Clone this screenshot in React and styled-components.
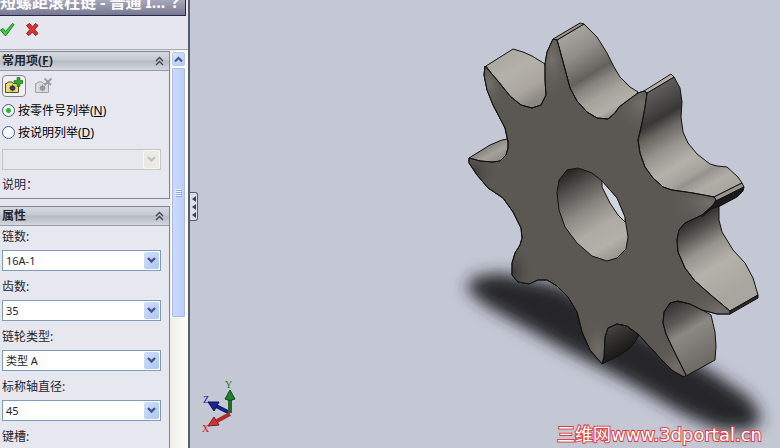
import React, { useState } from "react";
import styled, { createGlobalStyle } from "styled-components";

const FACE =
  "M485 66 L498 81 L510 96 L521 105 L532 108 L541 105 L546 95 L545 80 L545 64 L547 52 L553 39 L557 40 L562 58 L570 88 L577 101 L587 112 L597 118 L608 119 L615 113 L619 107 L627 101 L638 93 L644 91 L647 93 L645 107 L642 123 L638 140 L640 153 L645 167 L653 178 L663 187 L672 190 L693 193 L714 197 L716 200 L713 205 L702 215 L685 223 L679 230 L677 240 L678 252 L685 268 L695 281 L712 296 L730 311 L730 314 L717 314 L702 310 L690 304 L678 301 L670 303 L664 312 L663 323 L666 334 L675 353 L686 375 L684 377 L673 371 L660 358 L648 345 L639 335 L627 326 L617 324 L608 328 L605 337 L604 357 L602 364 L590 350 L582 332 L577 312 L568 297 L557 286 L547 280 L538 280 L529 284 L518 282 L512 275 L512 263 L515 253 L520 245 L522 238 L521 228 L513 212 L503 198 L488 188 L477 175 L469 163 L469 158 L480 161 L493 162 L500 161 L506 155 L508 148 L508 142 L505 128 L493 105 L487 90 L484 75 Z";

const HOLE =
  "M559 180 L567 170 L578 168 L592 173 L602 181 L617 198 L625 218 L628 237 L626 249 L617 258 L607 261 L592 256 L577 243 L565 227 L559 210 L557 193 Z";

const SIDES = [
  { fill: "url(#sideA)", d: "M486 66 L513 49 L523 52 L532 56 L545 64 L550 95 L541 108 L521 108 L508 96 Z" },
  { fill: "url(#sideB)", d: "M557 40 L584 24 L597 37 L607 53 L614 67 L620 77 L630 87 L638 92 L625 115 L608 122 L590 116 L572 96 Z" },
  { fill: "#96938e", d: "M553 39 L580 23 L584 24 L557 40 Z" },
  { fill: "url(#sideC)", d: "M647 93 L674 77 L680 88 L682 102 L681 117 L683 132 L688 143 L697 154 L710 164 L717 166 L727 167 L738 177 L742 183 L714 197 L690 196 L660 190 L640 165 L635 140 Z" },
  { fill: "#b3b0aa", d: "M644 91 L671 74 L674 77 L647 93 Z" },
  { fill: "url(#sideE)", d: "M712 206 L719 204 L719 220 L722 232 L733 250 L745 263 L753 278 L758 295 L730 311 L700 292 L674 260 L675 230 L690 220 Z" },
  { fill: "#98958f", d: "M714 197 L742 183 L744 187 L716 201 Z" },
  { fill: "#1b1b1b", d: "M716 201 L744 187 L743 191 L737 197 L720 206 L711 209 L702 217 Z" },
  { fill: "#2b2a2b", d: "M730 311 L758 295 L758 298 L730 314 Z" },
  { fill: "url(#sideF)", d: "M711 315 L715 332 L716 346 L715 360 L686 376 L668 346 L660 320 L668 301 L690 303 Z" },
  { fill: "url(#sideG)", d: "M639 335 L635 342 L630 348 L620 355 L602 364 L603 335 L612 322 L627 324 Z" },
  { fill: "url(#sideI)", d: "M469 158 L490 145 L502 140 L508 139 L511 152 L500 164 L485 163 Z" },
];

// soft light and dark spots toward the tooth tips, clipped to the front face
const SHADES = [
  { cx: 489, cy: 84, rx: 18, ry: 30, fill: "url(#lightSpot)" },
  { cx: 552, cy: 60, rx: 22, ry: 46, fill: "url(#lightSpot)" },
  { cx: 641, cy: 104, rx: 30, ry: 30, fill: "url(#lightSpot)" },
  { cx: 708, cy: 203, rx: 42, ry: 24, fill: "url(#lightSpot)" },
  { cx: 720, cy: 311, rx: 42, ry: 22, fill: "url(#lightSpot)" },
  { cx: 677, cy: 367, rx: 30, ry: 28, fill: "url(#lightSpot)" },
  { cx: 598, cy: 350, rx: 20, ry: 34, fill: "url(#lightSpot)" },
  { cx: 512, cy: 272, rx: 22, ry: 28, fill: "url(#darkSpot)" },
  { cx: 472, cy: 172, rx: 26, ry: 20, fill: "url(#darkSpot)" },
];

// every band runs along the axis of the wheel, so all gradients share one direction
const GRADIENTS = [
  {
    id: "sideA",
    from: [500, 52],
    to: [531, 104],
    stops: [[0, "#aaa7a1"], [0.4, "#b4b0aa"], [0.75, "#aaa69f"], [1, "#8b8782"]],
  },
  {
    id: "sideB",
    from: [570, 32],
    to: [618, 113],
    stops: [[0, "#a8a49e"], [0.25, "#8f8b86"], [0.5, "#64605d"], [0.6, "#86827d"], [0.75, "#a5a19b"], [0.92, "#b3afa9"], [1, "#8f8b86"]],
  },
  {
    id: "sideC",
    from: [660, 84],
    to: [723, 191],
    stops: [[0, "#62605c"], [0.14, "#4a4846"], [0.24, "#393735"], [0.34, "#6b6864"], [0.48, "#97938e"], [0.64, "#b5b1ab"], [0.76, "#a5a19b"], [0.8, "#95918c"], [0.9, "#b0aca6"], [1, "#aaa7a1"]],
  },
  {
    id: "sideE",
    from: [690, 215],
    to: [735, 291],
    stops: [[0, "#222120"], [0.2, "#54514e"], [0.42, "#97938e"], [0.65, "#b5b2ac"], [1, "#a9a6a0"]],
  },
  {
    id: "sideF",
    from: [670, 305],
    to: [706, 366],
    stops: [[0, "#383634"], [0.25, "#5b5855"], [0.45, "#8c8883"], [1, "#6b6864"]],
  },
  {
    id: "sideG",
    from: [610, 328],
    to: [626, 355],
    stops: [[0, "#45423f"], [0.5, "#2b2a28"], [1, "#151515"]],
  },
  {
    id: "sideI",
    from: [485, 145],
    to: [495, 162],
    stops: [[0, "#7f7b77"], [0.6, "#a5a19b"], [1, "#918d88"]],
  },
  {
    id: "bore",
    from: [565, 175],
    to: [614, 258],
    stops: [[0, "#2b2928"], [0.2, "#5a5754"], [0.42, "#8b8782"], [0.65, "#aeaaa4"], [0.85, "#b3b0aa"], [1, "#99958f"]],
  },
];

const FIELDS = [
  { id: "chain", label: "链数:", value: "16A-1" },
  { id: "teeth", label: "齿数:", value: "35" },
  { id: "type", label: "链轮类型:", value: "类型 A" },
  { id: "shaft", label: "标称轴直径:", value: "45" },
];

const Sprocket = () => (
  <SceneDrawing viewBox="190 0 590 448" role="img" aria-label="链轮">
    <defs>
      {GRADIENTS.map(({ id, from, to, stops }) => (
        <linearGradient key={id} id={id} gradientUnits="userSpaceOnUse" x1={from[0]} y1={from[1]} x2={to[0]} y2={to[1]}>
          {stops.map(([offset, color]) => (
            <stop key={offset} offset={offset} stopColor={color} />
          ))}
        </linearGradient>
      ))}
      <radialGradient id="lightSpot">
        <stop offset="0" stopColor="#7d7975" stopOpacity="0.7" />
        <stop offset="1" stopColor="#5b5753" stopOpacity="0" />
      </radialGradient>
      <radialGradient id="darkSpot">
        <stop offset="0" stopColor="#33312f" stopOpacity="0.8" />
        <stop offset="1" stopColor="#5b5753" stopOpacity="0" />
      </radialGradient>
      <clipPath id="faceClip">
        <path d={FACE} />
      </clipPath>
      <filter id="soft" x="-20%" y="-20%" width="140%" height="140%">
        <feGaussianBlur stdDeviation="8" />
      </filter>
    </defs>
    <path
      d="M466 288 L474 277 L500 273 L560 285 L640 330 L715 374 L750 398 L762 418 L752 430 L720 430 L685 415 L630 383 L560 347 L485 305 Z"
      fill="#27282c"
      filter="url(#soft)"
    />
    <g stroke="#111" strokeLinejoin="round">
      {SIDES.map((side) => (
        <path key={side.d} d={side.d} fill={side.fill} />
      ))}
      <path d={FACE} fill="#5b5753" />
    </g>
    <g clipPath="url(#faceClip)">
      {SHADES.map((shade) => (
        <ellipse key={`${shade.cx}-${shade.cy}`} {...shade} />
      ))}
    </g>
    <path d={FACE} fill="none" stroke="#111" strokeLinejoin="round" />
    <path d={HOLE} fill="url(#bore)" stroke="#111" />
    <path d="M602 181 L602 187 L610 203 L618 215 L625 222 L625 217 L617 198 Z" fill="#d0d4e0" stroke="#111" />
  </SceneDrawing>
);

const Triad = () => (
  <TriadDrawing width="36" height="56" viewBox="200 378 36 56" aria-hidden="true">
    <path d="M230 413 L214 405" stroke="#1b2180" strokeWidth="4" />
    <path d="M208 402 L219 402 L214 411 Z" fill="#1b2490" stroke="#10155c" />
    <path d="M230 413 V396" stroke="#1d6b27" strokeWidth="4" />
    <path d="M230 390 L235 399 Q230 402 225 399 Z" fill="#218030" stroke="#10491a" />
    <path d="M230 414 L217 421" stroke="#b42a2c" strokeWidth="4" />
    <path d="M208 426 L214 417 L219 425 Z" fill="#d03436" stroke="#801a1c" />
    <text x="225" y="388" fill="#14781f">Y</text>
    <text x="203" y="403" fill="#1217a0">Z</text>
    <text x="202" y="432" fill="#d0141a">X</text>
  </TriadDrawing>
);

const Chevrons = () => (
  <svg width="9" height="10" viewBox="0 0 9 10" fill="none" stroke="#3c4454" aria-hidden="true">
    <path d="M1 5 L4.500 1.500 L8 5 M1 9 L4.500 5.500 L8 9" strokeWidth="1.300" />
  </svg>
);

const FolderIcon = ({ disabled }) => (
  <svg width="18" height="18" viewBox="0 0 18 18" aria-hidden="true">
    <path
      d="M.5 15.500 V6.500 H2 L3 5 H7 L8 6.500 H13.500 V15.500 Z"
      fill={disabled ? "#dcdce0" : "#f3dc6c"}
      stroke={disabled ? "#a0a0a6" : "#57501e"}
    />
    <circle cx="7.500" cy="11" r="1.800" fill="none" stroke={disabled ? "#94949b" : "#29324e"} strokeWidth="1.500" />
    <path
      d="M7.500 7.500 V14.500 M4 11 H11 M5 8.500 L10 13.500 M10 8.500 L5 13.500"
      stroke={disabled ? "#94949b" : "#29324e"}
      strokeWidth="0.700"
    />
    {disabled ? (
      <path d="M9.500 1.500 L16 8 M16.500 1.500 L9.500 8" stroke="#9a9aa0" strokeWidth="1.800" />
    ) : (
      <path d="M12 .5 H15 V3.500 H18 V6.500 H15 V9.500 H12 V6.500 H9 V3.500 H12 Z" fill="#35a52c" stroke="#1b6f1b" strokeWidth="0.600" />
    )}
  </svg>
);

const Combo = ({ id, value, disabled, label }) => (
  <ComboBox>
    <ComboSelect id={id} disabled={disabled} aria-label={label} defaultValue={value}>
      <option>{value}</option>
    </ComboSelect>
    <ComboArrow $disabled={disabled}>
      <svg width="9" height="7" viewBox="0 0 9 7" fill="none" aria-hidden="true">
        <path d="M1 1 L4.500 4.500 L8 1" stroke={disabled ? "#c4c3b9" : "#43567e"} strokeWidth="2.400" />
      </svg>
    </ComboArrow>
  </ComboBox>
);

const App = () => {
  const [listBy, setListBy] = useState("number");

  return (
    <Page>
      <GlobalStyle />
      <Panel>
        <TitleBar>
          <Title>短螺距滚柱链 - 普通 I...</Title>
          <HelpButton type="button" aria-label="帮助">
            ?
          </HelpButton>
        </TitleBar>
        <Toolbar>
          <IconButton type="button" aria-label="确定">
            <svg width="15" height="15" viewBox="0 0 15 15" aria-hidden="true">
              <path d="M.5 8 L3 6.500 L5.500 9.500 L12.500 1.500 L14 2.500 L6 13.500 H5 Z" fill="#42d33d" stroke="#167a1c" />
            </svg>
          </IconButton>
          <IconButton type="button" aria-label="取消">
            <svg width="15" height="15" viewBox="0 0 15 15" aria-hidden="true">
              <path
                d="M1.500 3.500 L4.500 1.500 L7.500 5 L10.500 1.500 L13 3.500 L9.500 7.500 L13 11.500 L10.500 13.500 L7.500 10 L4 13.500 L1.500 11.500 L5 7.500 Z"
                fill="#e0322f"
                stroke="#94191b"
              />
            </svg>
          </IconButton>
        </Toolbar>
        <PanelBody>
          <Sections>
            <Section>
              <SectionHeader type="button">
                <span>
                  常用项(<u>F</u>)
                </span>
                <Chevrons />
              </SectionHeader>
              <ButtonRow>
                <FavoriteButton type="button" aria-label="添加">
                  <FolderIcon />
                </FavoriteButton>
                <FavoriteButton type="button" aria-label="删除" disabled>
                  <FolderIcon disabled />
                </FavoriteButton>
              </ButtonRow>
              <RadioLabel>
                <Radio type="radio" name="listBy" checked={listBy === "number"} onChange={() => setListBy("number")} />
                <span>
                  按零件号列举(<u>N</u>)
                </span>
              </RadioLabel>
              <RadioLabel>
                <Radio type="radio" name="listBy" checked={listBy === "desc"} onChange={() => setListBy("desc")} />
                <span>
                  按说明列举(<u>D</u>)
                </span>
              </RadioLabel>
              <FavoriteList>
                <Combo value="" label="列表" disabled />
              </FavoriteList>
              <Description>说明：</Description>
            </Section>
            <Section>
              <SectionHeader type="button">
                <span>属性</span>
                <Chevrons />
              </SectionHeader>
              {FIELDS.map((field) => (
                <Field key={field.id}>
                  <FieldLabel htmlFor={field.id}>{field.label}</FieldLabel>
                  <Combo id={field.id} value={field.value} />
                </Field>
              ))}
              <Field>
                <FieldLabel htmlFor="keyway">键槽:</FieldLabel>
                <Combo id="keyway" value="" />
              </Field>
            </Section>
          </Sections>
          <ScrollTrack>
            <ScrollButton type="button" aria-label="向上滚动">
              <svg width="9" height="7" viewBox="0 0 9 7" fill="none" aria-hidden="true">
                <path d="M1 5.500 L4.500 2 L8 5.500" stroke="#43567e" strokeWidth="2" />
              </svg>
            </ScrollButton>
            <ScrollThumb>
              <svg width="7" height="8" viewBox="0 0 7 8" aria-hidden="true">
                <path d="M0 .5 H6 M0 2.500 H6 M0 4.500 H6 M0 6.500 H6" stroke="#f2f6ff" />
                <path d="M1 1.500 H7 M1 3.500 H7 M1 5.500 H7 M1 7.500 H7" stroke="#90a8dc" />
              </svg>
            </ScrollThumb>
          </ScrollTrack>
        </PanelBody>
      </Panel>
      <Scene>
        <Sprocket />
        <CollapseTab type="button" aria-label="折叠">
          <svg width="4" height="22" viewBox="0 0 4 22" fill="#39415b" aria-hidden="true">
            <path d="M4 0 V6 L0 3 Z M4 8 V14 L0 11 Z M4 16 V22 L0 19 Z" />
          </svg>
        </CollapseTab>
        <Triad />
        <Watermark href="#">三维网www.3dportal.cn</Watermark>
      </Scene>
    </Page>
  );
};

export default App;

const GlobalStyle = createGlobalStyle`
  * {
    box-sizing: border-box;
  }

  body {
    margin: 0;
    font-family: "Noto Sans", "Noto Sans CJK SC", sans-serif;
    font-size: 12px;
    color: #25252f;
  }

  button,
  select {
    font: inherit;
    color: inherit;
    padding: 0;
    margin: 0;
    border: 0;
    background: none;
  }

  svg {
    display: block;
    flex-shrink: 0;
  }
`;

const Page = styled.div`
  display: flex;
  height: 100vh;
  overflow: hidden;
`;

const Panel = styled.aside`
  display: flex;
  flex-direction: column;
  flex: 0 0 190px;
  background: #e5e6ee;
  border-right: 2px solid #565b6e;
  overflow: hidden;
`;

const TitleBar = styled.header`
  display: flex;
  align-items: flex-end;
  justify-content: space-between;
  flex: 0 0 16px;
  margin-right: 2px;
  padding-right: 6px;
  overflow: hidden;
  color: #fff;
  font-size: 16px;
  font-weight: bold;
  line-height: 26px;
  background: linear-gradient(#a7a8bd, #77788f);
  border-right: 1px solid #222849;
  border-bottom: 1px solid #222849;
`;

const Title = styled.span`
  white-space: nowrap;
`;

const HelpButton = styled.button`
  line-height: 26px;
`;

const Toolbar = styled.div`
  display: flex;
  align-items: center;
  gap: 10px;
  flex: 0 0 34px;
  padding-bottom: 6px;
  border-bottom: 1px solid #a5a8b3;
`;

const IconButton = styled.button`
  display: flex;
`;

const PanelBody = styled.div`
  display: flex;
  flex: 1;
  min-height: 0;
`;

const Sections = styled.div`
  display: flex;
  flex-direction: column;
  flex: 1;
  gap: 7px;
  padding-top: 1px;
  overflow: hidden;
`;

const Section = styled.section`
  flex-shrink: 0;
  background: #e7e7f0;
  border: solid #83858f;
  border-width: 1px 1px 1px 0;
`;

const SectionHeader = styled.button`
  display: flex;
  align-items: center;
  justify-content: space-between;
  width: 100%;
  height: 19px;
  padding: 0 5px 0 2px;
  font-weight: bold;
  line-height: 18px;
  background: linear-gradient(#d5d9e0, #c5cad2 45%, #b5bac4 50%, #d3d7de);
  border-bottom: 1px solid #979ba6;
`;

const ButtonRow = styled.div`
  display: flex;
  gap: 6px;
  padding: 4px 2px 3px;
`;

const FavoriteButton = styled.button`
  display: flex;
  align-items: center;
  justify-content: center;
  width: 24px;
  height: 22px;
  border: 1px solid ${(props) => (props.disabled ? "transparent" : "#858894")};
  border-radius: 4px;
  background: ${(props) => (props.disabled ? "none" : "#efeff4")};
`;

const RadioLabel = styled.label`
  display: flex;
  align-items: center;
  gap: 3px;
  height: 22px;
  padding: 0 0 2px 2px;
  color: #000;
`;

const Radio = styled.input`
  appearance: none;
  width: 13px;
  height: 13px;
  margin: 0;
  border: 1px solid #3c6183;
  border-radius: 50%;
  background: #f6f7f8;

  &:checked {
    background: radial-gradient(circle, #2fb52c 0 2px, #f6f7f8 3px);
  }
`;

const FavoriteList = styled.div`
  padding: 5px 0 4px;
`;

const Description = styled.div`
  height: 24px;
  padding-left: 2px;
  line-height: 22px;
`;

const Field = styled.div`
  height: 50px;
  padding-top: 1px;
`;

const FieldLabel = styled.label`
  display: block;
  height: 23px;
  padding-left: 2px;
  line-height: 20px;
`;

const ComboBox = styled.div`
  position: relative;
  margin: 0 8px 0 2px;
`;

const ComboSelect = styled.select`
  appearance: none;
  display: block;
  width: 100%;
  height: 21px;
  padding: 0 20px 0 3px;
  font-size: 11px;
  border: 1px solid ${(props) => (props.disabled ? "#c9c7ba" : "#7f9db9")};
  border-radius: 0;
  background: ${(props) => (props.disabled ? "#e7e7ee" : "#fff")};
  opacity: 1;
`;

const ComboArrow = styled.span`
  position: absolute;
  top: 2px;
  right: 2px;
  display: flex;
  align-items: center;
  justify-content: center;
  width: 15px;
  height: 17px;
  border-radius: 2px;
  background: ${(props) => (props.$disabled ? "#ebeae6" : "linear-gradient(135deg, #d2e0fe, #aec4f6)")};
  box-shadow: 0 0 0 1px ${(props) => (props.$disabled ? "#f7f7f5" : "#fff")};
  pointer-events: none;
`;

const ScrollTrack = styled.div`
  display: flex;
  flex-direction: column;
  flex: 0 0 18px;
  padding: 1px 2px 0 1px;
  background: linear-gradient(90deg, #efeee8, #fdfdf8);
`;

const ScrollButton = styled.button`
  display: flex;
  align-items: center;
  justify-content: center;
  flex: 0 0 16px;
  background: linear-gradient(135deg, #dbe6ff, #b4c9f8);
  border: 1px solid #fff;
  border-radius: 3px;
  box-shadow: inset 0 0 0 1px #b7c8ee;
`;

const ScrollThumb = styled.div`
  display: flex;
  align-items: center;
  justify-content: center;
  flex: 0 0 251px;
  background: linear-gradient(90deg, #cddcff, #bacdfb);
  border: 1px solid #fff;
  border-radius: 2px;
  box-shadow: inset 0 0 0 1px #a9bce8;
`;

const Scene = styled.main`
  position: relative;
  flex: 1;
  min-width: 0;
  overflow: hidden;
  background: #c4c8d4;
`;

const SceneDrawing = styled.svg`
  width: 100%;
`;

const CollapseTab = styled.button`
  position: absolute;
  top: 192px;
  left: 0;
  display: flex;
  align-items: center;
  justify-content: center;
  width: 8px;
  height: 29px;
  background: #dcdee8;
  border: solid #565b6e;
  border-width: 1px 1px 1px 0;
  border-radius: 0 3px 3px 0;
`;

const TriadDrawing = styled.svg`
  position: absolute;
  bottom: 14px;
  left: 10px;

  text {
    font-family: "Liberation Serif", serif;
    font-size: 10px;
  }
`;

const Watermark = styled.a`
  position: absolute;
  right: 18px;
  bottom: 2px;
  font-family: "DejaVu Sans", "Noto Sans CJK SC", sans-serif;
  font-size: 18px;
  line-height: 22px;
  color: #fff;
  text-decoration: none;
  white-space: nowrap;
  paint-order: stroke fill;
  -webkit-text-stroke: 2px #dd3f42;
`;
